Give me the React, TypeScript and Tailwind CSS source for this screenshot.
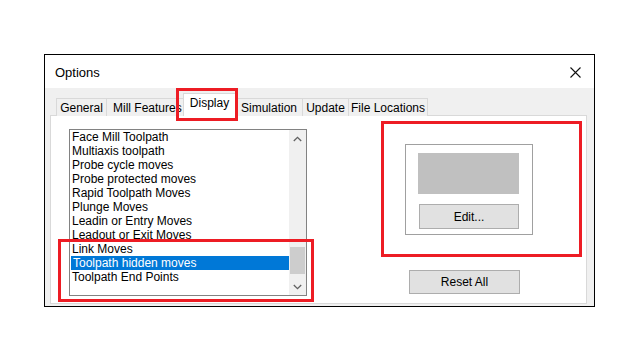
import React from "react";

const items = [
  "Face Mill Toolpath",
  "Multiaxis toolpath",
  "Probe cycle moves",
  "Probe protected moves",
  "Rapid Toolpath Moves",
  "Plunge Moves",
  "Leadin or Entry Moves",
  "Leadout or Exit Moves",
  "Link Moves",
  "Toolpath hidden moves",
  "Toolpath End Points",
];

function Chevron({ up }: { up?: boolean }) {
  return (
    <svg width="9" height="6" viewBox="0 0 9 6">
      <path
        d={up ? "M0.8 5 L4.5 1.3 L8.2 5" : "M0.8 1 L4.5 4.7 L8.2 1"}
        fill="none"
        stroke="#606060"
        strokeWidth="1.3"
      />
    </svg>
  );
}

export default function App() {
  return (
    <div
      className="relative w-[640px] h-[360px] bg-white pt-[54px] pl-[44px] text-[12px] text-black"
      style={{ fontFamily: '"Liberation Sans", Arial, sans-serif' }}
    >
      <div className="w-[551px] h-[253px] border border-black bg-[#f0f0f0] flex flex-col">
        {/* title bar */}
        <div className="h-[33px] bg-white flex items-center justify-between pl-[10px] pr-[13px] pt-[2px]">
          <span className="text-[13px]">Options</span>
          <svg width="11" height="11" viewBox="0 0 11 11">
            <path d="M0.5 0.5 L10.5 10.5 M10.5 0.5 L0.5 10.5" stroke="#111" strokeWidth="1.1" />
          </svg>
        </div>
        {/* body */}
        <div className="flex-1 flex flex-col pl-[5px] pr-[7px] pb-[2px] pt-[5px]">
          {/* tabs */}
          <div className="h-[23px] flex items-end pl-[6px] -mb-px relative z-10">
            <div className="w-[51px] h-[18px] border border-b-0 border-[#d9d9d9] bg-[#f0f0f0] flex items-center justify-center">
              General
            </div>
            <div className="w-[80px] h-[18px] border border-l-0 border-b-0 border-[#d9d9d9] bg-[#f0f0f0] flex items-center pl-[6px] overflow-hidden whitespace-nowrap">
              Mill Features
            </div>
            <div className="w-[53px] h-[23px] -ml-[4px] border border-b-0 border-[#d9d9d9] bg-white flex items-center justify-center pb-[4px] relative z-10">
              Display
            </div>
            <div className="w-[67px] h-[18px] border border-l-0 border-b-0 border-[#d9d9d9] bg-[#f0f0f0] flex items-center justify-center">
              Simulation
            </div>
            <div className="w-[46px] h-[18px] border border-l-0 border-b-0 border-[#d9d9d9] bg-[#f0f0f0] flex items-center justify-center">
              Update
            </div>
            <div className="w-[79px] h-[18px] border border-l-0 border-b-0 border-[#d9d9d9] bg-[#f0f0f0] flex items-center justify-center">
              File Locations
            </div>
          </div>
          {/* panel */}
          <div className="flex-1 border border-[#d9d9d9] bg-white flex pl-[18px] pt-[13px]">
            {/* list box */}
            <div className="w-[238px] h-[167px] border border-[#828282] flex">
              <div className="flex-1 flex flex-col">
                {items.map((it) => {
                  const sel = it === "Toolpath hidden moves";
                  return (
                    <div
                      key={it}
                      className={
                        sel
                          ? "h-[14px] leading-[14px] ml-[1px] pl-[2px] bg-[#0078d7] text-white whitespace-nowrap"
                          : "h-[14px] leading-[14px] pl-[2px] whitespace-nowrap"
                      }
                    >
                      {it}
                    </div>
                  );
                })}
              </div>
              <div className="w-[17px] bg-[#f0f0f0] flex flex-col">
                <div className="h-[17px] flex items-center justify-center">
                  <Chevron up />
                </div>
                <div className="flex-1" />
                <div className="h-[27px] mx-[1px] bg-[#cdcdcd] mb-[4px]" />
                <div className="h-[17px] flex items-center justify-center">
                  <Chevron />
                </div>
              </div>
            </div>
            {/* right column */}
            <div className="ml-[98px] mt-[15px] flex flex-col">
              <div className="w-[128px] h-[91px] border border-[#a0a0a0] flex flex-col pl-[12px] pt-[8px]">
                <div className="w-[101px] h-[41px] bg-[#c0c0c0]" />
                <div className="mt-[10px] ml-[1px] w-[100px] h-[25px] border border-[#adadad] bg-[#e1e1e1] flex items-center justify-center">
                  Edit...
                </div>
              </div>
              <div className="mt-[35px] ml-[4px] w-[111px] h-[24px] border border-[#adadad] bg-[#e1e1e1] flex items-center justify-center">
                Reset All
              </div>
            </div>
          </div>
        </div>
      </div>

      {/* red highlight boxes */}
      <div className="absolute left-[176px] top-[88px] w-[62px] h-[33px] border-[3px] border-[#ed1c24] z-20" />
      <div className="absolute left-[58px] top-[239px] w-[256px] h-[63px] border-[3px] border-[#ed1c24] z-20" />
      <div className="absolute left-[381px] top-[121px] w-[201px] h-[136px] border-[3px] border-[#ed1c24] z-20" />
    </div>
  );
}
